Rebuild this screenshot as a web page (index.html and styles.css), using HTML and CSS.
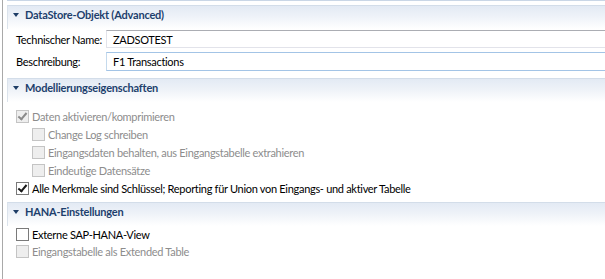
FILE: index.html
```html
<!DOCTYPE html>
<html lang="de">
<head>
<meta charset="utf-8">
<link rel="stylesheet" href="styles.css">
</head>
<body>
<div class="frame">
  <div class="top-stub"></div>

  <section class="section">
    <div class="section-header"><span class="twisty"></span>DataStore-Objekt (Advanced)</div>
    <div class="form">
      <label class="label">Technischer Name:</label>
      <div class="input">ZADSOTEST</div>
      <label class="label">Beschreibung:</label>
      <div class="input focused">F1 Transactions</div>
    </div>
  </section>

  <section class="section">
    <div class="section-header"><span class="twisty"></span>Modellierungseigenschaften</div>
    <div class="checks">
      <div class="check disabled"><span class="box checked"></span>Daten aktivieren/komprimieren</div>
      <div class="check disabled sub"><span class="box"></span>Change Log schreiben</div>
      <div class="check disabled sub"><span class="box"></span>Eingangsdaten behalten, aus Eingangstabelle extrahieren</div>
      <div class="check disabled sub"><span class="box"></span>Eindeutige Datensätze</div>
      <div class="check"><span class="box checked"></span>Alle Merkmale sind Schlüssel; Reporting für Union von Eingangs- und aktiver Tabelle</div>
    </div>
  </section>

  <section class="section last">
    <div class="section-header"><span class="twisty"></span>HANA-Einstellungen</div>
    <div class="checks">
      <div class="check"><span class="box"></span>Externe SAP-HANA-View</div>
      <div class="check disabled"><span class="box"></span>Eingangstabelle als Extended Table</div>
    </div>
  </section>
</div>
</body>
</html>
```

FILE: styles.css
```css
html, body {
  margin: 0;
  padding: 0;
  background: #ffffff;
}
body {
  font-family: Lato, "Open Sans", "Liberation Sans", sans-serif;
  font-size: 11px;
  letter-spacing: -0.3px;
  color: #1a1a1a;
  width: 605px;
  height: 279px;
  overflow: hidden;
  white-space: nowrap;
}
.frame {
  margin-left: 2px;
  border-left: 1px solid #a9a9a9;
  padding-left: 4px;
  height: 279px;
  box-sizing: border-box;
}
.top-stub {
  height: 1px;
  background: #c9d6e6;
  margin-bottom: 4px;
}
.section {
  display: flex;
  flex-direction: column;
}
.section-header {
  height: 24px;
  border-top: 1px solid #d3dde9;
  border-left: 1px solid #dbe3ec;
  background: linear-gradient(#e3eaf4 0%, #eef2f8 45%, #ffffff 100%);
  display: flex;
  align-items: center;
  padding-left: 5px;
  padding-bottom: 6px;
  box-sizing: border-box;
  font-weight: bold;
  font-size: 11px;
  letter-spacing: -0.2px;
  color: #1d3f6d;
}
.twisty {
  width: 0;
  height: 0;
  border-left: 3.5px solid transparent;
  border-right: 3.5px solid transparent;
  border-top: 4px solid #1e3d66;
  margin-right: 6px;
  margin-top: 1px;
}
.form {
  display: grid;
  grid-template-columns: 87px 1fr;
  column-gap: 3px;
  row-gap: 4px;
  padding-left: 9px;
  padding-top: 1px;
  margin-bottom: 7px;
}
.label {
  display: flex;
  align-items: center;
  color: #000;
}
.input {
  height: 18px;
  box-sizing: border-box;
  border: 1px solid #e2e3ea;
  border-top-color: #abadb3;
  border-right: none;
  padding-left: 6px;
  display: flex;
  align-items: center;
  color: #000;
}
.input.focused {
  height: 19px;
  border-color: #c5daed;
  border-top-color: #a3c4e6;
  border-bottom-color: #a3c4e6;
}
.checks {
  display: flex;
  flex-direction: column;
  padding-left: 9px;
  padding-top: 5px;
  margin-bottom: 5px;
}
.last .checks {
  padding-top: 0;
}
.check {
  height: 18px;
  display: flex;
  align-items: center;
  color: #000;
}
.last .check {
  height: 17px;
}
.check.sub {
  padding-left: 16px;
}
.check.disabled {
  color: #8d8d8d;
}
.box {
  width: 13px;
  height: 13px;
  box-sizing: border-box;
  border: 1px solid #7a7a7a;
  background: #fff;
  margin-right: 3px;
  position: relative;
  flex: none;
}
.check.disabled .box {
  border-color: #c4c4c4;
  background: #eeeeee;
}
.box.checked::after {
  content: "";
  position: absolute;
  left: 3px;
  top: 0px;
  width: 3px;
  height: 7px;
  border-right: 2px solid #1a1a1a;
  border-bottom: 2px solid #1a1a1a;
  transform: rotate(40deg);
}
.check.disabled .box.checked::after {
  border-color: #8a8a8a;
}
```
